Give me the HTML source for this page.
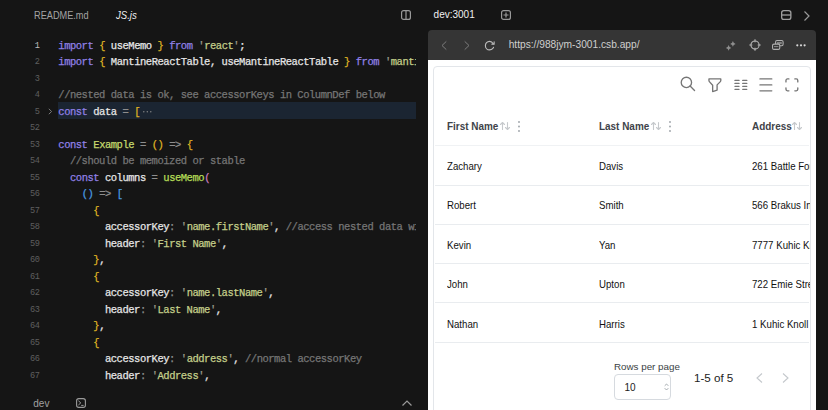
<!DOCTYPE html>
<html><head><meta charset="utf-8">
<style>
*{margin:0;padding:0;box-sizing:border-box}
html,body{width:828px;height:410px;overflow:hidden;background:#151515;font-family:"Liberation Sans",sans-serif}
.a{position:absolute;white-space:pre}
#code{position:absolute;left:0;top:38.5px;width:416px;height:350px;overflow:hidden;font-family:"Liberation Mono",monospace;font-size:10.5px;letter-spacing:-0.47px;line-height:16.5px}
.ln{position:absolute;left:0;margin-top:-0.9px;width:39.3px;text-align:right;color:#5f5f5f;font-size:8.6px;letter-spacing:-0.55px}
.cl{position:absolute;left:58.3px;margin-top:-0.7px;white-space:pre;color:#e6e6e6;-webkit-text-stroke:0.25px}
.k{color:#9080e6}.y{color:#dfb224}.s{color:#c4cf8a}.c{color:#767676}.f{color:#c6d96c}.g{color:#b5de57}.p{color:#c87bbd}.b{color:#4a9ae0}.o{color:#8e8e8e}.q{color:#9a9a8a}
svg{position:absolute;overflow:visible}
.th{font-size:10.3px;font-weight:700;color:#3e4349;transform-origin:0 0;transform:scaleX(.965)}
.td{font-size:10.8px;color:#111;transform-origin:0 0;transform:scaleX(.895)}
</style></head><body>
<!-- editor tabs -->
<div class="a" style="left:33.5px;top:8.6px;font-size:10.5px;color:#a3a3a3;transform-origin:0 0;transform:scaleX(.875)">README.md</div>
<div class="a" style="left:116px;top:8.6px;font-size:10.5px;color:#f0f0f0;font-style:italic;transform-origin:0 0;transform:scaleX(.91)">JS.js</div>
<svg style="left:401px;top:10px" width="10" height="10" viewBox="0 0 10 10"><rect x="0.6" y="0.6" width="8.8" height="8.8" rx="2" fill="none" stroke="#9a9a9a" stroke-width="1.2"/><line x1="5" y1="0.6" x2="5" y2="9.4" stroke="#9a9a9a" stroke-width="1.2"/></svg>

<div id="code">
<div class="ln" style="top:0;color:#bdbdbd">1</div><div class="cl" style="top:0"><span class="k">import</span> <span class="y">{</span> useMemo <span class="y">}</span> <span class="k">from</span> <span class="q">'</span><span class="s">react</span><span class="q">'</span>;</div>
<div class="ln" style="top:16.5px">2</div><div class="cl" style="top:16.5px"><span class="k">import</span> <span class="y">{</span> MantineReactTable, useMantineReactTable <span class="y">}</span> <span class="k">from</span> <span class="q">'</span><span class="s">mantine-react-table</span><span class="q">'</span>;</div>
<div class="ln" style="top:33px">3</div>
<div class="ln" style="top:49.5px">4</div><div class="cl c" style="top:49.5px">//nested data is ok, see accessorKeys in ColumnDef below</div>
<div style="position:absolute;left:58px;top:63.7px;width:358.5px;height:16.6px;background:#1b2532"></div>
<div class="ln" style="top:66px">5</div><div class="cl" style="top:66px"><span class="k">const</span> data <span class="o">=</span> <span class="y">[</span></div>
<div class="ln" style="top:82.5px">52</div>
<div class="ln" style="top:99px">53</div><div class="cl" style="top:99px"><span class="k">const</span> <span class="f">Example</span> <span class="o">=</span> <span class="y">()</span> <span class="o">=&gt;</span> <span class="y">{</span></div>
<div class="ln" style="top:115.5px">54</div><div class="cl c" style="top:115.5px">  //should be memoized or stable</div>
<div class="ln" style="top:132px">55</div><div class="cl" style="top:132px">  <span class="k">const</span> columns <span class="o">=</span> <span class="g">useMemo</span><span class="p">(</span></div>
<div class="ln" style="top:148.5px">56</div><div class="cl" style="top:148.5px">    <span class="b">()</span> <span class="o">=&gt;</span> <span class="b">[</span></div>
<div class="ln" style="top:165px">57</div><div class="cl" style="top:165px">      <span class="y">{</span></div>
<div class="ln" style="top:181.5px">58</div><div class="cl" style="top:181.5px">        accessorKey<span class="o">:</span> <span class="q">'</span><span class="s">name.firstName</span><span class="q">'</span>, <span class="c">//access nested data with dot notation</span></div>
<div class="ln" style="top:198px">59</div><div class="cl" style="top:198px">        header<span class="o">:</span> <span class="q">'</span><span class="s">First Name</span><span class="q">'</span>,</div>
<div class="ln" style="top:214.5px">60</div><div class="cl" style="top:214.5px">      <span class="y">}</span>,</div>
<div class="ln" style="top:231px">61</div><div class="cl" style="top:231px">      <span class="y">{</span></div>
<div class="ln" style="top:247.5px">62</div><div class="cl" style="top:247.5px">        accessorKey<span class="o">:</span> <span class="q">'</span><span class="s">name.lastName</span><span class="q">'</span>,</div>
<div class="ln" style="top:264px">63</div><div class="cl" style="top:264px">        header<span class="o">:</span> <span class="q">'</span><span class="s">Last Name</span><span class="q">'</span>,</div>
<div class="ln" style="top:280.5px">64</div><div class="cl" style="top:280.5px">      <span class="y">}</span>,</div>
<div class="ln" style="top:297px">65</div><div class="cl" style="top:297px">      <span class="y">{</span></div>
<div class="ln" style="top:313.5px">66</div><div class="cl" style="top:313.5px">        accessorKey<span class="o">:</span> <span class="q">'</span><span class="s">address</span><span class="q">'</span>, <span class="c">//normal accessorKey</span></div>
<div class="ln" style="top:330px">67</div><div class="cl" style="top:330px">        header<span class="o">:</span> <span class="q">'</span><span class="s">Address</span><span class="q">'</span>,</div>
</div>
<svg style="left:48.3px;top:108px" width="5" height="7" viewBox="0 0 5 7"><path d="M0.8 0.8 L3.6 3.5 L0.8 6.2" fill="none" stroke="#7a7a7a" stroke-width="1"/></svg>
<svg style="left:142.5px;top:110.8px" width="9" height="2" viewBox="0 0 9 2"><circle cx="0.8" cy="0.8" r="0.7" fill="#8a8a8a"/><circle cx="4.3" cy="0.8" r="0.7" fill="#8a8a8a"/><circle cx="7.8" cy="0.8" r="0.7" fill="#8a8a8a"/></svg>

<!-- bottom bar -->
<div class="a" style="left:33.3px;top:398px;font-size:10px;color:#a0a0a0">dev</div>
<svg style="left:76px;top:397.6px" width="10" height="10" viewBox="0 0 10 10"><rect x="0.6" y="0.6" width="8.8" height="8.8" rx="2.2" fill="none" stroke="#9a9a9a" stroke-width="1.1"/><path d="M2.4 2.8 L4.8 4.9 L2.4 7 M5.2 7.4 H7.6" fill="none" stroke="#9a9a9a" stroke-width="1"/></svg>
<svg style="left:401.5px;top:399.5px" width="10" height="6" viewBox="0 0 10 6"><path d="M0.5 5.5 L5 1 L9.5 5.5" fill="none" stroke="#9a9a9a" stroke-width="1.2"/></svg>

<!-- right pane header -->
<div class="a" style="left:433.6px;top:9.3px;font-size:10px;color:#f0f0f0">dev:3001</div>
<svg style="left:501px;top:10px" width="10" height="10" viewBox="0 0 10 10"><rect x="0.6" y="0.6" width="8.8" height="8.8" rx="2" fill="none" stroke="#9a9a9a" stroke-width="1.2"/><path d="M5 2.5 V7.5 M2.5 5 H7.5" stroke="#9a9a9a" stroke-width="1.2"/></svg>
<svg style="left:781px;top:10px" width="10.5" height="10" viewBox="0 0 10.5 10"><rect x="0.65" y="0.65" width="9.2" height="8.7" rx="2.2" fill="none" stroke="#a0a0a0" stroke-width="1.3"/><path d="M0.6 5 H9.9" stroke="#a0a0a0" stroke-width="1.3"/></svg>
<svg style="left:803.5px;top:10.5px" width="6" height="10" viewBox="0 0 6 10"><path d="M0.5 0.5 L5 5 L0.5 9.5" fill="none" stroke="#9a9a9a" stroke-width="1.2"/></svg>

<!-- browser frame -->
<div style="position:absolute;left:428px;top:30.4px;width:388.4px;height:29.3px;background:#353535;border-radius:4px 4px 0 0"></div>
<div style="position:absolute;left:428px;top:59.7px;width:388.4px;height:351px;background:#fff"></div>
<svg style="left:441px;top:40.8px" width="6" height="9" viewBox="0 0 6 9"><path d="M5.3 0.4 L1 4.5 L5.3 8.6" fill="none" stroke="#7c7c7c" stroke-width="1"/></svg>
<svg style="left:463.5px;top:40.8px" width="6" height="9" viewBox="0 0 6 9"><path d="M0.7 0.4 L5 4.5 L0.7 8.6" fill="none" stroke="#7c7c7c" stroke-width="1"/></svg>
<svg style="left:484.3px;top:39.8px" width="11.25" height="11.25" viewBox="0 0 15 15"><path d="M12.24 5 C11.65 3.9 10.28 1.85 7.5 1.85 C4.06 1.85 1.85 4.66 1.85 7.5 C1.85 10.34 4.06 13.15 7.5 13.15 C9.17 13.15 10.53 12.5 11.5 11.5 C12.03 10.97 12.44 10.34 12.72 9.66" fill="none" stroke="#bcbcbc" stroke-width="1.5" stroke-linecap="round"/><path d="M10.5 5.5 H13.5 V2.5" fill="none" stroke="#bcbcbc" stroke-width="1.5" stroke-linecap="round" stroke-linejoin="round"/></svg>
<div class="a" style="left:508.7px;top:39px;font-size:10.2px;color:#cfcfcf">https://988jym-3001.csb.app/</div>
<svg style="left:725px;top:39.5px" width="11" height="11" viewBox="0 0 11 11"><path d="M3.6 5 Q3.9 7.3 6.3 7.9 Q3.9 8.5 3.6 10.8 Q3.3 8.5 0.9 7.9 Q3.3 7.3 3.6 5 Z M7.9 1 Q8.2 3.3 10.6 3.9 Q8.2 4.5 7.9 6.8 Q7.6 4.5 5.2 3.9 Q7.6 3.3 7.9 1 Z" fill="#8e8e8e"/></svg>
<svg style="left:748.7px;top:38.8px" width="12" height="12" viewBox="0 0 12 12"><circle cx="6" cy="6" r="4.1" fill="none" stroke="#b5b5b5" stroke-width="1.05"/><path d="M6 0.3 V3.3 M6 8.7 V11.7 M0.3 6 H3.3 M8.7 6 H11.7" stroke="#b5b5b5" stroke-width="1.1"/></svg>
<svg style="left:772px;top:40px" width="12" height="10" viewBox="0 0 12 10"><rect x="3.6" y="0.55" width="7.5" height="5.2" rx="1.4" fill="none" stroke="#b0b0b0" stroke-width="1.1"/><path d="M5 2.4 H9.8 M5 3.6 H9.8" stroke="#b0b0b0" stroke-width="0.7"/><rect x="0.55" y="4.1" width="7.2" height="5.3" rx="1.4" fill="#353535" stroke="#b0b0b0" stroke-width="1.1"/><path d="M2 6.6 H6.4" stroke="#b0b0b0" stroke-width="0.7"/></svg>
<svg style="left:795.8px;top:44px" width="10" height="3" viewBox="0 0 10 3"><circle cx="1.3" cy="1.3" r="1.1" fill="#d8d8d8"/><circle cx="5" cy="1.3" r="1.1" fill="#d8d8d8"/><circle cx="8.6" cy="1.3" r="1.1" fill="#d8d8d8"/></svg>

<!-- card -->
<div style="position:absolute;left:433.4px;top:66px;width:377.4px;height:360px;border:1px solid #e3e6ea;border-radius:4px;background:#fff"></div>
<div id="tbl" style="position:absolute;left:435px;top:67px;width:375px;height:343px;overflow:hidden">
<svg style="left:244.2px;top:8.4px" width="17.76" height="17.76" viewBox="0 0 24 24" fill="none" stroke="#767676" stroke-width="1.8" stroke-linecap="round" stroke-linejoin="round"><circle cx="10" cy="10" r="7"/><path d="M21 21l-6 -6"/></svg>
<svg style="left:270.7px;top:8.7px" width="17.76" height="17.76" viewBox="0 0 24 24" fill="none" stroke="#767676" stroke-width="1.8" stroke-linecap="round" stroke-linejoin="round"><path d="M4 4h16v2.172a2 2 0 0 1 -.586 1.414l-4.414 4.414v7l-6 2v-8.5l-4.48 -4.928a2 2 0 0 1 -.52 -1.345v-2.227z"/></svg>
<svg style="left:296.5px;top:8.8px" width="17.76" height="17.76" viewBox="0 0 24 24" fill="none" stroke="#767676" stroke-width="1.8" stroke-linecap="round" stroke-linejoin="round"><path d="M4 6l5.5 0M4 10l5.5 0M4 14l5.5 0M4 18l5.5 0M14.5 6l5.5 0M14.5 10l5.5 0M14.5 14l5.5 0M14.5 18l5.5 0"/></svg>
<svg style="left:321.7px;top:8.7px" width="17.76" height="17.76" viewBox="0 0 24 24" fill="none" stroke="#767676" stroke-width="1.8" stroke-linecap="round" stroke-linejoin="round"><path d="M4 20h16M4 12h16M4 4h16"/></svg>
<svg style="left:348.4px;top:8.7px" width="17.76" height="17.76" viewBox="0 0 24 24" fill="none" stroke="#767676" stroke-width="1.8" stroke-linecap="round" stroke-linejoin="round"><path d="M4 8v-2a2 2 0 0 1 2 -2h2M4 16v2a2 2 0 0 0 2 2h2M16 4h2a2 2 0 0 1 2 2v2M16 20h2a2 2 0 0 0 2 -2v-2"/></svg>

<div class="a th" style="left:12px;top:53.8px">First Name</div>
<div class="a th" style="left:164px;top:53.8px">Last Name</div>
<div class="a th" style="left:316.5px;top:53.8px">Address</div>
<svg style="left:64.0px;top:52.7px" width="12" height="12" viewBox="0 0 24 24" fill="none" stroke="#c6c9cc" stroke-width="2.2" stroke-linecap="round" stroke-linejoin="round"><path d="M3 9l4 -4l4 4m-4 -4v14M21 15l-4 4l-4 -4m4 4v-14"/></svg>
<svg style="left:215.0px;top:52.7px" width="12" height="12" viewBox="0 0 24 24" fill="none" stroke="#c6c9cc" stroke-width="2.2" stroke-linecap="round" stroke-linejoin="round"><path d="M3 9l4 -4l4 4m-4 -4v14M21 15l-4 4l-4 -4m4 4v-14"/></svg>
<svg style="left:356.0px;top:52.7px" width="12" height="12" viewBox="0 0 24 24" fill="none" stroke="#c6c9cc" stroke-width="2.2" stroke-linecap="round" stroke-linejoin="round"><path d="M3 9l4 -4l4 4m-4 -4v14M21 15l-4 4l-4 -4m4 4v-14"/></svg>
<svg style="left:83px;top:54px" width="2" height="11" viewBox="0 0 2 11"><circle cx="1" cy="1" r="0.9" fill="#9aa0a6"/><circle cx="1" cy="5.5" r="0.9" fill="#9aa0a6"/><circle cx="1" cy="10" r="0.9" fill="#9aa0a6"/></svg>
<svg style="left:234px;top:54px" width="2" height="11" viewBox="0 0 2 11"><circle cx="1" cy="1" r="0.9" fill="#9aa0a6"/><circle cx="1" cy="5.5" r="0.9" fill="#9aa0a6"/><circle cx="1" cy="10" r="0.9" fill="#9aa0a6"/></svg>
<div style="position:absolute;left:0;top:78.3px;width:374px;height:1px;background:#f0f2f4"></div>
<div class="a td" style="left:11.5px;top:92.90px">Zachary</div><div class="a td" style="left:164px;top:92.90px">Davis</div><div class="a td" style="left:316.7px;top:92.90px">261 Battle Ford</div>
<div style="position:absolute;left:0;top:117.56px;width:374px;height:1px;background:#e9ecef"></div>
<div class="a td" style="left:11.5px;top:132.36px">Robert</div><div class="a td" style="left:164px;top:132.36px">Smith</div><div class="a td" style="left:316.7px;top:132.36px">566 Brakus Inlet</div>
<div style="position:absolute;left:0;top:156.82px;width:374px;height:1px;background:#e9ecef"></div>
<div class="a td" style="left:11.5px;top:171.82px">Kevin</div><div class="a td" style="left:164px;top:171.82px">Yan</div><div class="a td" style="left:316.7px;top:171.82px">7777 Kuhic Knoll</div>
<div style="position:absolute;left:0;top:196.08px;width:374px;height:1px;background:#e9ecef"></div>
<div class="a td" style="left:11.5px;top:211.28px">John</div><div class="a td" style="left:164px;top:211.28px">Upton</div><div class="a td" style="left:316.7px;top:211.28px">722 Emie Stream</div>
<div style="position:absolute;left:0;top:235.34px;width:374px;height:1px;background:#e9ecef"></div>
<div class="a td" style="left:11.5px;top:250.74px">Nathan</div><div class="a td" style="left:164px;top:250.74px">Harris</div><div class="a td" style="left:316.7px;top:250.74px">1 Kuhic Knoll</div>
<div style="position:absolute;left:0;top:274.60px;width:374px;height:1px;background:#e9ecef"></div>

<div class="a" style="left:179px;top:294px;font-size:9.8px;color:#3a3f44">Rows per page</div>
<div style="position:absolute;left:179px;top:306.5px;width:57px;height:26px;border:1px solid #d6dadf;border-radius:4px"></div>
<div class="a" style="left:189.5px;top:315px;font-size:10px;color:#222">10</div>
<svg style="left:229px;top:316px" width="5" height="8" viewBox="0 0 5 8"><path d="M0.7 2.8 L2.5 1 L4.3 2.8 M0.7 5.2 L2.5 7 L4.3 5.2" fill="none" stroke="#9aa0a6" stroke-width="0.9"/></svg>
<div class="a" style="left:259px;top:304px;font-size:11.6px;color:#222">1-5 of 5</div>
<svg style="left:320.5px;top:305.5px" width="7" height="10" viewBox="0 0 7 10"><path d="M6 0.5 L1 5 L6 9.5" fill="none" stroke="#c4c8cc" stroke-width="1.1"/></svg>
<svg style="left:347px;top:305.5px" width="7" height="10" viewBox="0 0 7 10"><path d="M1 0.5 L6 5 L1 9.5" fill="none" stroke="#c4c8cc" stroke-width="1.1"/></svg>
</div>
</body></html>
